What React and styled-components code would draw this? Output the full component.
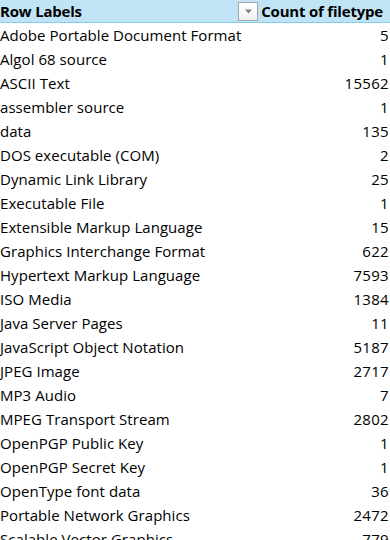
import React from 'react';
import styled, {createGlobalStyle} from 'styled-components';

const GlobalStyle = createGlobalStyle`
  html, body {
    margin: 0;
    padding: 0;
    background: #ffffff;
  }
  body {
    font-family: "Open Sans", "Liberation Sans", sans-serif;
    color: #000000;
    overflow: hidden;
  }
`;

const Sheet = styled.div`
  width: 390px;
  display: flex;
  flex-direction: column;
`;

const HeaderRow = styled.div`
  display: grid;
  grid-template-columns: 259px 1fr;
  height: 22px;
  background: #c0e4f5;
  border-bottom: 1px solid #83cceb;
  font-weight: 700;
  font-size: 15px;
`;

const HeaderCell = styled.div`
  display: flex;
  align-items: center;
  justify-content: ${props => (props.right ? 'flex-end' : 'space-between')};
  padding-right: ${props => (props.right ? '7px' : '1px')};
  letter-spacing: -0.2px;
  white-space: nowrap;
`;

const FilterButton = styled.div`
  width: 20px;
  height: 19px;
  box-sizing: border-box;
  border: 1px solid #a6a6a6;
  background: linear-gradient(#ffffff, #f0f0f0);
  display: flex;
  align-items: center;
  justify-content: center;
`;

const Row = styled.div`
  display: flex;
  justify-content: space-between;
  align-items: center;
  height: 24px;
  font-size: 15px;
  white-space: nowrap;
`;

const Label = styled.span`
  letter-spacing: 0.05px;
`;

const Count = styled.span`
  padding-right: 1px;
  letter-spacing: 0.3px;
`;

const rows = [
  ['Adobe Portable Document Format', 5],
  ['Algol 68 source', 1],
  ['ASCII Text', 15562],
  ['assembler source', 1],
  ['data', 135],
  ['DOS executable (COM)', 2],
  ['Dynamic Link Library', 25],
  ['Executable File', 1],
  ['Extensible Markup Language', 15],
  ['Graphics Interchange Format', 622],
  ['Hypertext Markup Language', 7593],
  ['ISO Media', 1384],
  ['Java Server Pages', 11],
  ['JavaScript Object Notation', 5187],
  ['JPEG Image', 2717],
  ['MP3 Audio', 7],
  ['MPEG Transport Stream', 2802],
  ['OpenPGP Public Key', 1],
  ['OpenPGP Secret Key', 1],
  ['OpenType font data', 36],
  ['Portable Network Graphics', 2472],
  ['Scalable Vector Graphics', 779],
];

export default function App() {
  return (
    <>
      <GlobalStyle/>
      <Sheet>
        <HeaderRow>
          <HeaderCell>
            <span>Row Labels</span>
            <FilterButton>
              <svg width="9" height="5" viewBox="0 0 9 5">
                <path d="M1 0.5 L8 0.5 L4.5 4.5 Z" fill="#7f7f7f"/>
              </svg>
            </FilterButton>
          </HeaderCell>
          <HeaderCell right>Count of filetype</HeaderCell>
        </HeaderRow>
        {rows.map(([label, count]) => (
          <Row key={label}>
            <Label>{label}</Label>
            <Count>{count}</Count>
          </Row>
        ))}
      </Sheet>
    </>
  );
}
